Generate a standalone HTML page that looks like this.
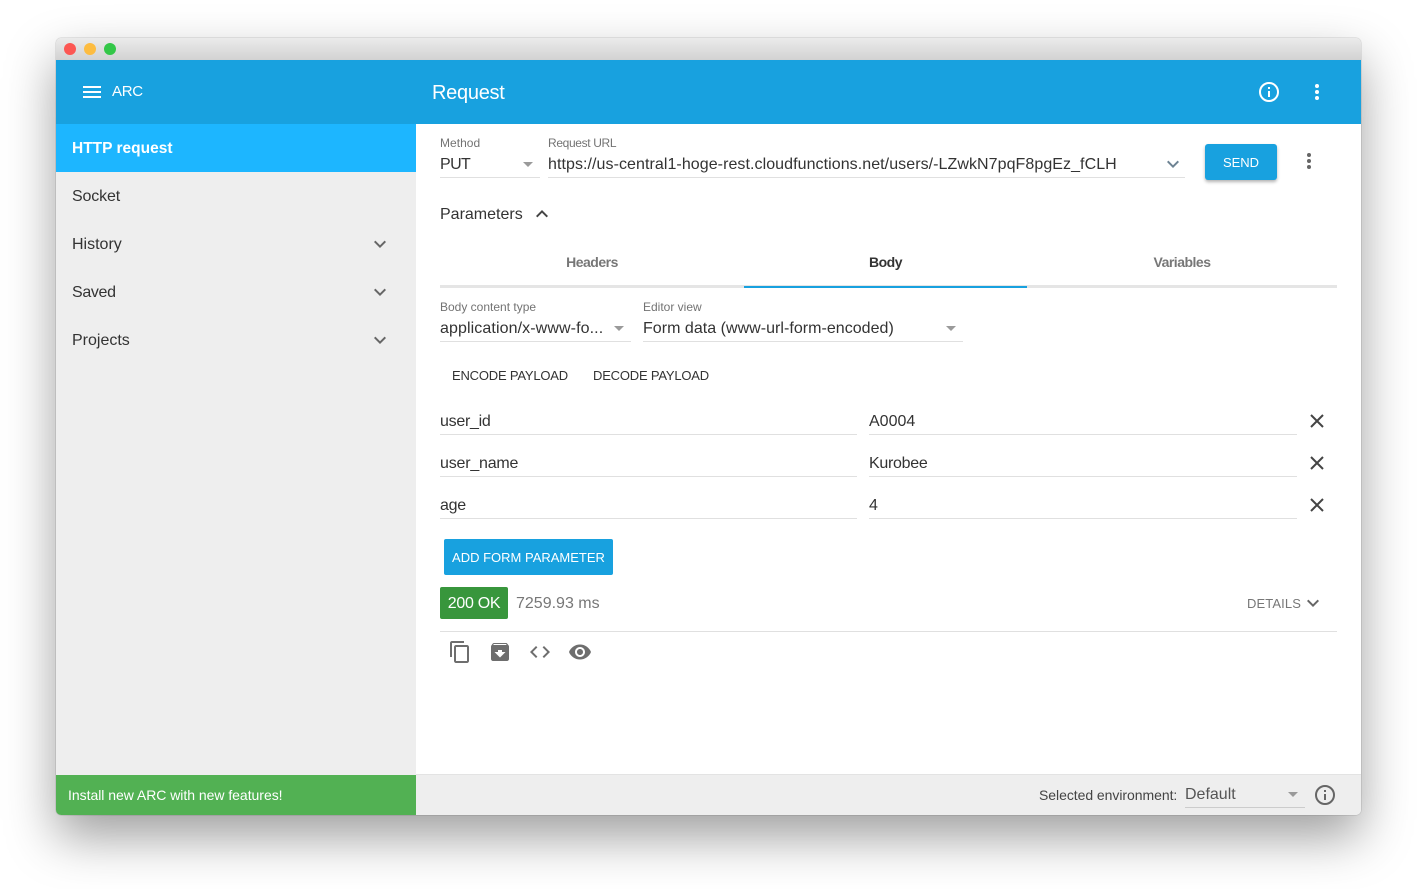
<!DOCTYPE html>
<html><head><meta charset="utf-8"><style>
html,body{margin:0;padding:0;width:1417px;height:889px;background:#fff;overflow:hidden;font-family:"Liberation Sans",sans-serif}
.a{position:absolute;white-space:nowrap}
#w{position:absolute;left:56px;top:38px;width:1305px;height:777px;border-radius:5px;box-shadow:0 22px 50px rgba(0,0,0,.38),0 0 1px rgba(0,0,0,.5);background:#fff}
.r{position:absolute;background:#e0e0e0;height:1px}
.t{font-size:16px;color:#333;line-height:20px}
.l{font-size:12px;color:#737373;line-height:14px}
.tab{font-size:14px;line-height:20px;font-weight:bold;text-align:center;letter-spacing:-.5px}
svg{position:absolute;overflow:visible}
</style></head><body>
<div id="w"></div>
<div class="a" style="left:56px;top:38px;width:1305px;height:22px;background:linear-gradient(#ebebeb,#d2d2d2);border-radius:5px 5px 0 0"></div>
<div class="a" style="left:64px;top:43px;width:12px;height:12px;border-radius:50%;background:#fc5753"></div>
<div class="a" style="left:84px;top:43px;width:12px;height:12px;border-radius:50%;background:#fdbc40"></div>
<div class="a" style="left:104px;top:43px;width:12px;height:12px;border-radius:50%;background:#33c748"></div>
<div class="a" style="left:56px;top:60px;width:1305px;height:64px;background:#18a1df"></div>
<div class="a" style="left:83px;top:86px;width:18px;height:2px;background:#fff"></div>
<div class="a" style="left:83px;top:91px;width:18px;height:2px;background:#fff"></div>
<div class="a" style="left:83px;top:96px;width:18px;height:2px;background:#fff"></div>
<div class="a" style="left:112px;top:82px;font-size:15px;line-height:20px;color:#fff;letter-spacing:-.3px">ARC</div>
<div class="a" style="left:432px;top:81px;font-size:20px;line-height:24px;color:#fff;letter-spacing:-.28px">Request</div>
<svg style="left:1257px;top:80px" width="24" height="24" fill="none"><circle cx="12" cy="12" r="9" stroke="#fff" stroke-width="2"/><rect x="11" y="11" width="2" height="6" fill="#fff"/><rect x="11" y="7" width="2" height="2" fill="#fff"/></svg>
<svg style="left:1305px;top:80px" width="24" height="24" fill="#fff"><circle cx="12" cy="6" r="2"/><circle cx="12" cy="12" r="2"/><circle cx="12" cy="18" r="2"/></svg>

<div class="a" style="left:56px;top:124px;width:360px;height:651px;background:#eee"></div>
<div class="a" style="left:56px;top:124px;width:360px;height:48px;background:#1db6ff"></div>
<div class="a" style="left:72px;top:139px;font-size:15.5px;line-height:20px;font-weight:bold;color:#fff">HTTP request</div>
<div class="a t" style="left:72px;top:187px;letter-spacing:-.15px">Socket</div>
<div class="a t" style="left:72px;top:235px">History</div>
<div class="a t" style="left:72px;top:283px;letter-spacing:-.35px">Saved</div>
<div class="a t" style="left:72px;top:331px">Projects</div>
<svg style="left:368px;top:232px" width="24" height="24" fill="#666"><path d="M7.4 8.600 12 13.200l4.600-4.600L18 10l-6 6-6-6z"/></svg>
<svg style="left:368px;top:280px" width="24" height="24" fill="#666"><path d="M7.4 8.600 12 13.200l4.600-4.600L18 10l-6 6-6-6z"/></svg>
<svg style="left:368px;top:328px" width="24" height="24" fill="#666"><path d="M7.4 8.600 12 13.200l4.600-4.600L18 10l-6 6-6-6z"/></svg>
<div class="a" style="left:56px;top:775px;width:360px;height:40px;background:#52b153;border-radius:0 0 0 5px"></div>
<div class="a" style="left:68px;top:786px;font-size:14px;line-height:18px;color:#fff;letter-spacing:-.03px">Install new ARC with new features!</div>

<div class="a l" style="left:440px;top:136px;letter-spacing:.03px">Method</div>
<div class="a t" style="left:440px;top:155px;letter-spacing:-.6px">PUT</div>
<svg style="left:523px;top:162px" width="10" height="5" fill="#9a9a9a"><path d="M0 0h10L5 5z"/></svg>
<div class="r" style="left:440px;top:177px;width:100px"></div>
<div class="a l" style="left:548px;top:136px;letter-spacing:-.35px">Request URL</div>
<div class="a t" style="left:548px;top:155px;letter-spacing:.066px">https://us-central1-hoge-rest.cloudfunctions.net/users/-LZwkN7pqF8pgEz_fCLH</div>
<svg style="left:1161px;top:152px" width="24" height="24" fill="#6d8393"><path d="M7.4 8.600 12 13.200l4.600-4.600L18 10l-6 6-6-6z"/></svg>
<div class="r" style="left:548px;top:177px;width:637px"></div>
<div class="a" style="left:1205px;top:144px;width:72px;height:36px;background:#18a1df;border-radius:3px;box-shadow:0 2px 3px rgba(0,0,0,.3);color:#fff;font-size:13px;line-height:38px;text-align:center">SEND</div>
<svg style="left:1297px;top:149px" width="24" height="24" fill="#666"><circle cx="12" cy="6" r="2"/><circle cx="12" cy="12" r="2"/><circle cx="12" cy="18" r="2"/></svg>

<div class="a t" style="left:440px;top:205px">Parameters</div>
<svg style="left:530px;top:202px" width="24" height="24" fill="#444"><path d="M12 8l6 6-1.400 1.400L12 10.800l-4.600 4.600L6 14z"/></svg>

<div class="a tab" style="left:440px;top:252px;width:304px;color:#777">Headers</div>
<div class="a tab" style="left:744px;top:252px;width:283px;color:#333">Body</div>
<div class="a tab" style="left:1027px;top:252px;width:310px;color:#777">Variables</div>
<div class="a" style="left:440px;top:285px;width:897px;height:3px;background:#e5e5e5"></div>
<div class="a" style="left:744px;top:286px;width:283px;height:2px;background:#18a1df"></div>

<div class="a l" style="left:440px;top:300px">Body content type</div>
<div class="a t" style="left:440px;top:319px;letter-spacing:.1px">application/x-www-fo...</div>
<svg style="left:614px;top:326px" width="10" height="5" fill="#9a9a9a"><path d="M0 0h10L5 5z"/></svg>
<div class="r" style="left:440px;top:341px;width:191px"></div>
<div class="a l" style="left:643px;top:300px">Editor view</div>
<div class="a t" style="left:643px;top:319px;letter-spacing:.03px">Form data (www-url-form-encoded)</div>
<svg style="left:946px;top:326px" width="10" height="5" fill="#9a9a9a"><path d="M0 0h10L5 5z"/></svg>
<div class="r" style="left:643px;top:341px;width:320px"></div>

<div class="a" style="left:452px;top:367px;font-size:13px;line-height:18px;color:#333;letter-spacing:-.2px">ENCODE PAYLOAD</div>
<div class="a" style="left:593px;top:367px;font-size:13px;line-height:18px;color:#333;letter-spacing:-.2px">DECODE PAYLOAD</div>

<div class="a t" style="left:440px;top:412px;letter-spacing:-.28px">user_id</div><div class="r" style="left:440px;top:434px;width:417px"></div>
<div class="a t" style="left:869px;top:412px">A0004</div><div class="r" style="left:869px;top:434px;width:428px"></div>
<div class="a t" style="left:440px;top:454px;letter-spacing:-.2px">user_name</div><div class="r" style="left:440px;top:476px;width:417px"></div>
<div class="a t" style="left:869px;top:454px;letter-spacing:-.28px">Kurobee</div><div class="r" style="left:869px;top:476px;width:428px"></div>
<div class="a t" style="left:440px;top:496px;letter-spacing:-.3px">age</div><div class="r" style="left:440px;top:518px;width:417px"></div>
<div class="a t" style="left:869px;top:496px">4</div><div class="r" style="left:869px;top:518px;width:428px"></div>
<svg style="left:1310px;top:414px" width="14" height="14" stroke="#444" stroke-width="2" fill="none"><path d="M1 1l12 12M13 1 1 13"/></svg>
<svg style="left:1310px;top:456px" width="14" height="14" stroke="#444" stroke-width="2" fill="none"><path d="M1 1l12 12M13 1 1 13"/></svg>
<svg style="left:1310px;top:498px" width="14" height="14" stroke="#444" stroke-width="2" fill="none"><path d="M1 1l12 12M13 1 1 13"/></svg>

<div class="a" style="left:444px;top:539px;width:169px;height:36px;background:#18a1df;border-radius:2px;color:#fff;font-size:13px;line-height:38px;text-align:center">ADD FORM PARAMETER</div>

<div class="a" style="left:440px;top:587px;width:68px;height:32px;background:#38963c;border-radius:2px;color:#fff;font-size:16px;line-height:33px;text-align:center;letter-spacing:-.3px">200 OK</div>
<div class="a" style="left:516px;top:594px;font-size:16px;line-height:20px;color:#777">7259.93 ms</div>
<div class="a" style="left:1247px;top:595px;font-size:13px;line-height:18px;color:#777;letter-spacing:.12px">DETAILS</div>
<svg style="left:1301px;top:591px" width="24" height="24" fill="#666"><path d="M7.4 8.600 12 13.200l4.600-4.600L18 10l-6 6-6-6z"/></svg>
<div class="r" style="left:440px;top:631px;width:897px"></div>

<svg style="left:448px;top:640px" width="24" height="24" fill="#6e6e6e"><path d="M16 1H4c-1.100 0-2 .9-2 2v14h2V3h12V1zm3 4H8c-1.100 0-2 .9-2 2v14c0 1.100.9 2 2 2h11c1.100 0 2-.9 2-2V7c0-1.100-.9-2-2-2zm0 16H8V7h11v14z"/></svg>
<svg style="left:488px;top:640px" width="24" height="24" fill="#6e6e6e"><path d="M20.500 5.200 19.100 3.500C18.900 3.200 18.500 3 18 3H6c-.5 0-.9.2-1.200.5L3.500 5.200C3.200 5.600 3 6 3 6.500V19c0 1.100.9 2 2 2h14c1.100 0 2-.9 2-2V6.500c0-.5-.2-.9-.5-1.300zM12 17.500 6.500 12H10v-2h4v2h3.500L12 17.500zM5.100 5l.8-1h12l.9 1H5.100z"/></svg>
<svg style="left:528px;top:640px" width="24" height="24" fill="#6e6e6e"><path d="M9.400 16.600 4.800 12l4.600-4.600L8 6l-6 6 6 6 1.400-1.400zm5.200 0 4.600-4.600-4.600-4.600L16 6l6 6-6 6-1.400-1.400z"/></svg>
<svg style="left:568px;top:640px" width="24" height="24" fill="#6e6e6e"><path d="M12 4.500C7 4.500 2.700 7.600 1 12c1.700 4.400 6 7.500 11 7.500s9.300-3.100 11-7.500c-1.700-4.400-6-7.500-11-7.500zM12 17c-2.800 0-5-2.200-5-5s2.200-5 5-5 5 2.200 5 5-2.200 5-5 5zm0-8c-1.700 0-3 1.300-3 3s1.300 3 3 3 3-1.300 3-3-1.300-3-3-3z"/></svg>

<div class="a" style="left:416px;top:774px;width:945px;height:41px;background:#eee;border-radius:0 0 5px 0"></div>
<div class="r" style="left:416px;top:774px;width:945px;background:#e3e3e3"></div>
<div class="a" style="left:1039px;top:786px;font-size:14px;line-height:18px;color:#444;letter-spacing:-.05px">Selected environment:</div>
<div class="a" style="left:1185px;top:785px;font-size:16px;line-height:20px;color:#555">Default</div>
<svg style="left:1288px;top:792px" width="10" height="5" fill="#9a9a9a"><path d="M0 0h10L5 5z"/></svg>
<div class="r" style="left:1185px;top:807px;width:120px;background:#ccc"></div>
<svg style="left:1313px;top:783px" width="24" height="24" fill="none"><circle cx="12" cy="12" r="9" stroke="#666" stroke-width="2"/><rect x="11" y="11" width="2" height="6" fill="#666"/><rect x="11" y="7" width="2" height="2" fill="#666"/></svg>
</body></html>
